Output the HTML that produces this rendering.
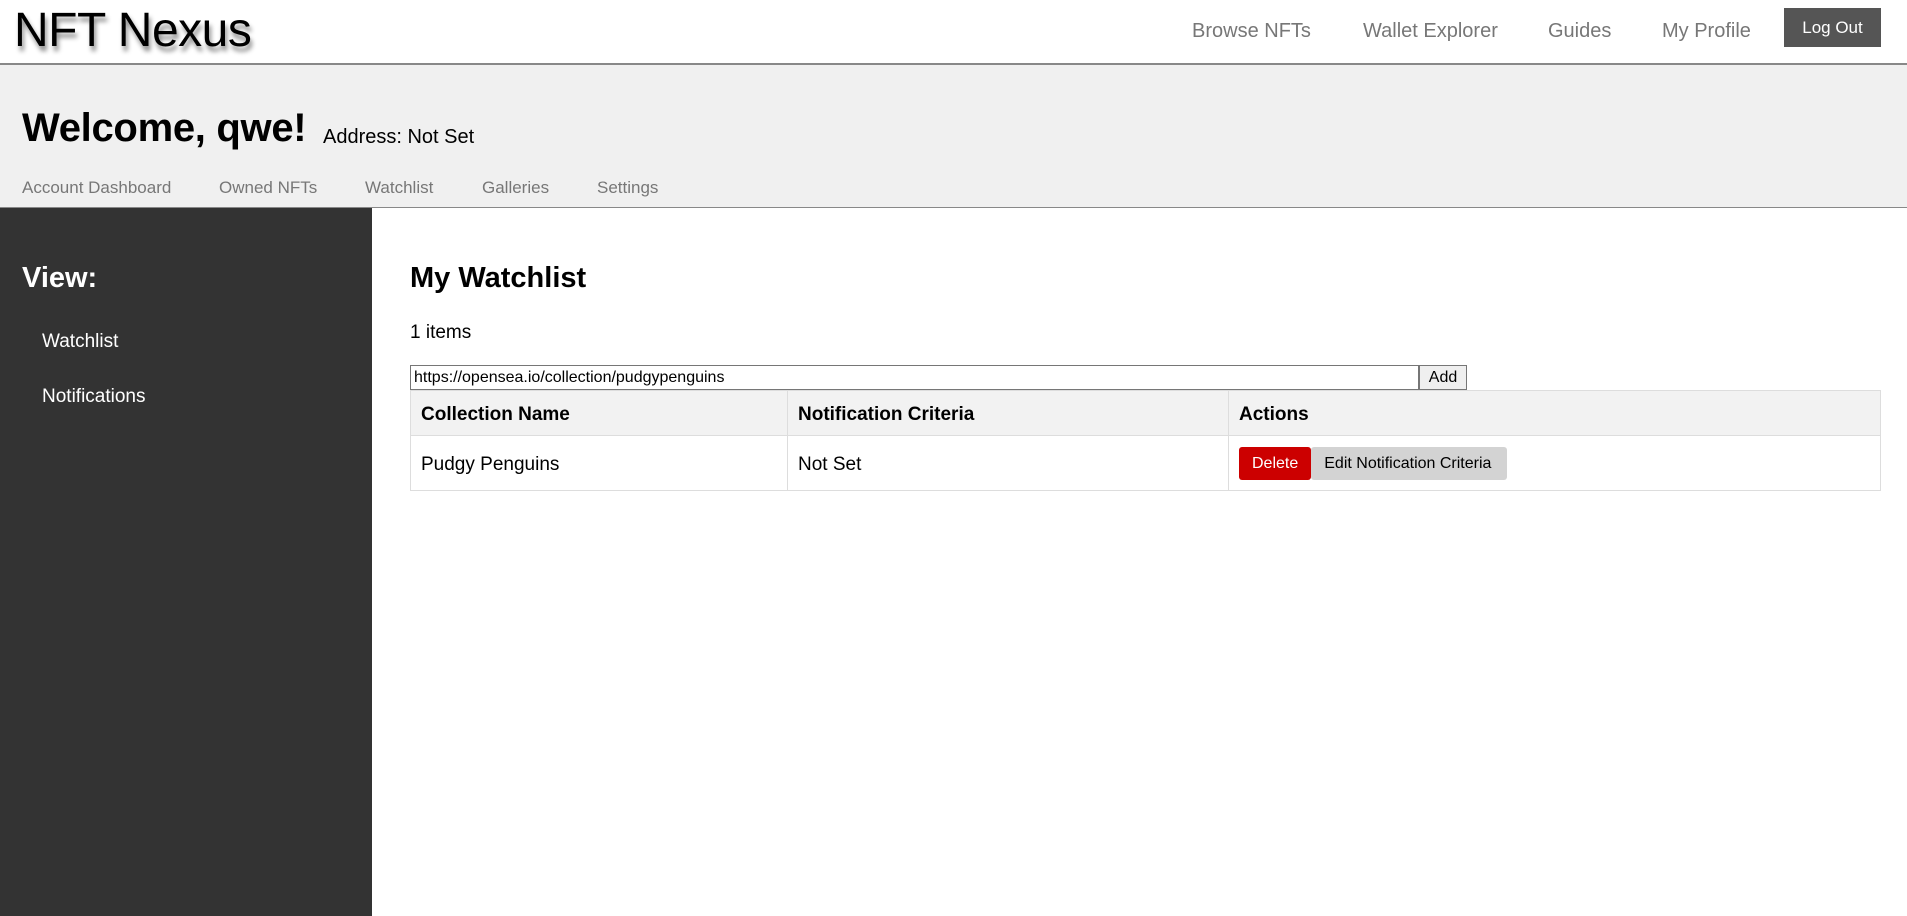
<!DOCTYPE html>
<html><head><meta charset="utf-8"><style>
*{box-sizing:border-box;margin:0;padding:0}
body{width:1907px;height:916px;overflow:hidden;font-family:"Liberation Sans",Arial,sans-serif;background:#fff;position:relative}
.abs{position:absolute;white-space:nowrap}
.top{position:absolute;left:0;top:0;width:1907px;height:65px;border-bottom:2px solid #888;background:#fff}
.logo{left:14px;top:3px;font-size:48px;color:#000;text-shadow:2px 5px 5px rgba(0,0,0,.45);letter-spacing:-0.5px}
.nl{top:20px;font-size:20px;color:#777}
.lo{left:1784px;top:8px;width:97px;height:39px;background:#555;color:#fff;font-size:17px;line-height:39px;text-align:center}
.band{position:absolute;left:0;top:65px;width:1907px;height:143px;background:#f0f0f0;border-bottom:1px solid #888}
.sn{top:178px;font-size:17px;color:#777}
.side{position:absolute;left:0;top:208px;width:372px;height:708px;background:#333}
td,th{border:1px solid #ddd;text-align:left;font-size:19px;padding:0 10px}
</style></head><body>
<div class="top"></div>
<div class="abs logo">NFT Nexus</div>
<div class="abs nl" style="left:1192px">Browse NFTs</div>
<div class="abs nl" style="left:1363px">Wallet Explorer</div>
<div class="abs nl" style="left:1548px">Guides</div>
<div class="abs nl" style="left:1662px">My Profile</div>
<div class="abs lo">Log Out</div>
<div class="band"></div>
<div class="abs" style="left:22px;top:106px;font-size:40px;font-weight:bold;letter-spacing:-0.3px">Welcome, qwe!</div>
<div class="abs" style="left:323px;top:126px;font-size:20px">Address: Not Set</div>
<div class="abs sn" style="left:22px">Account Dashboard</div>
<div class="abs sn" style="left:219px">Owned NFTs</div>
<div class="abs sn" style="left:365px">Watchlist</div>
<div class="abs sn" style="left:482px">Galleries</div>
<div class="abs sn" style="left:597px">Settings</div>
<div class="side"></div>
<div class="abs" style="left:22px;top:262px;font-size:29px;font-weight:bold;color:#fff">View:</div>
<div class="abs" style="left:42px;top:331px;font-size:19px;color:#fff">Watchlist</div>
<div class="abs" style="left:42px;top:386px;font-size:19px;color:#fff">Notifications</div>
<div class="abs" style="left:410px;top:262px;font-size:29px;font-weight:bold">My Watchlist</div>
<div class="abs" style="left:410px;top:322px;font-size:19px">1 items</div>
<div class="abs" style="left:410px;top:365px;width:1009px;height:25px;border:1px solid #767676;font-size:16px;padding:3px 3px">https://opensea.io/collection/pudgypenguins</div>
<div class="abs" style="left:1419px;top:365px;width:48px;height:25px;border:1px solid #767676;background:#efefef;font-size:16px;text-align:center;line-height:23px">Add</div>
<table class="abs" style="left:410px;top:390px;width:1471px;border-collapse:collapse">
<tr style="background:#f2f2f2;height:45px"><th style="width:377px;padding-top:3px">Collection Name</th><th style="width:441px;padding-top:3px">Notification Criteria</th><th style="padding-top:3px">Actions</th></tr>
<tr style="height:55px"><td style="padding-top:3px">Pudgy Penguins</td><td style="padding-top:3px">Not Set</td><td><span style="display:inline-block;background:#c00;color:#fff;font-size:16px;padding:0 13px;height:33px;line-height:33px;border-radius:3px">Delete</span><span style="display:inline-block;background:#d3d3d3;color:#000;font-size:16px;padding:0 16px 0 13px;height:33px;line-height:33px;border-radius:3px">Edit Notification Criteria</span></td></tr>
</table>
</body></html>
